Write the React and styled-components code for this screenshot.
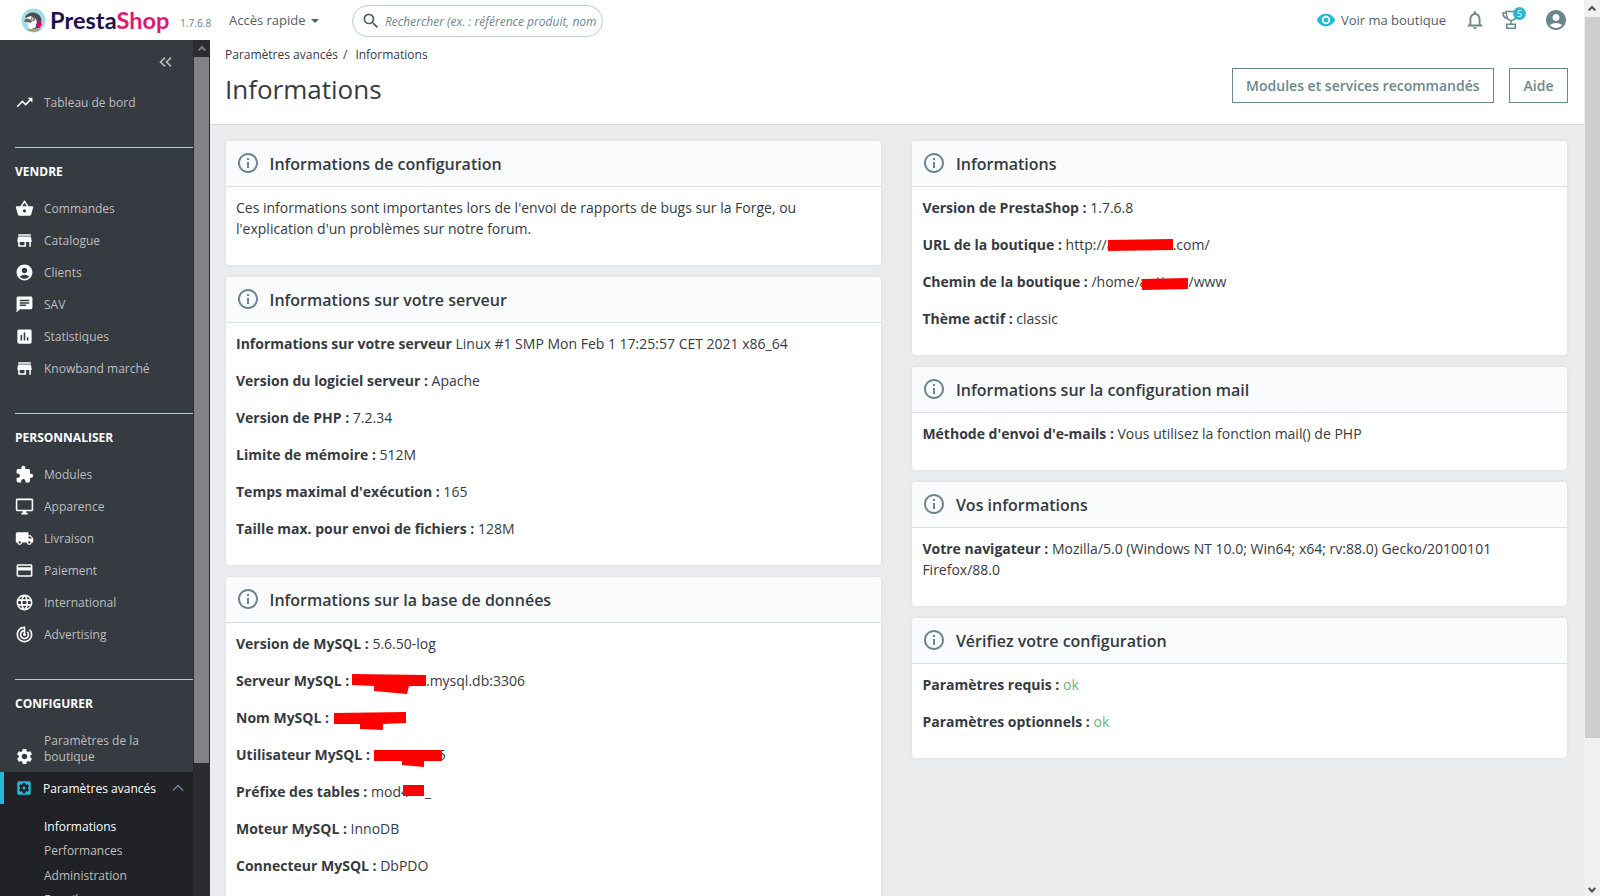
import React from "react";
import styled, { createGlobalStyle } from "styled-components";
import {
  MdTrendingUp,
  MdShoppingBasket,
  MdStore,
  MdAccountCircle,
  MdChat,
  MdAssessment,
  MdExtension,
  MdOutlineDesktopWindows,
  MdLocalShipping,
  MdPayment,
  MdLanguage,
  MdTrackChanges,
  MdSettings,
  MdSettingsApplications,
  MdInfoOutline,
  MdNotificationsNone,
  MdRemoveRedEye,
  MdSearch,
} from "react-icons/md";

const menu = [
  {
    title: "VENDRE",
    items: [
      { label: "Commandes", icon: MdShoppingBasket },
      { label: "Catalogue", icon: MdStore },
      { label: "Clients", icon: MdAccountCircle },
      { label: "SAV", icon: MdChat },
      { label: "Statistiques", icon: MdAssessment },
      { label: "Knowband marché", icon: MdStore },
    ],
  },
  {
    title: "PERSONNALISER",
    items: [
      { label: "Modules", icon: MdExtension },
      { label: "Apparence", icon: MdOutlineDesktopWindows },
      { label: "Livraison", icon: MdLocalShipping },
      { label: "Paiement", icon: MdPayment },
      { label: "International", icon: MdLanguage },
      { label: "Advertising", icon: MdTrackChanges },
    ],
  },
];

const submenu = ["Informations", "Performances", "Administration", "E-mail"];

// Marker shapes hiding the private parts of a value
const marks = {
  url: { width: 66, shape: 67, left: 0, top: 5, points: "1,1 66,0 66,11 1,12", text: "a" },
  path: { width: 49, shape: 49, left: 0, top: 7, points: "2,1 48,0 48,11 2,12", text: "anti" },
  server: {
    width: 73,
    shape: 75,
    left: -1,
    top: 3,
    points: "0,1 74,2 74,13 57,13 55,21 22,18 22,13 0,12",
  },
  name: {
    width: 73,
    shape: 73,
    left: 1,
    top: 5,
    points: "0,1 72,0 72,11 49,12 49,18 26,17 26,12 0,12",
  },
  user: {
    width: 68,
    shape: 68,
    left: 0,
    top: 6,
    points: "0,0 68,0 68,11 50,11 50,17 28,15 28,11 0,11",
  },
  prefix: { width: 24, shape: 22, left: 2, top: 4, points: "0,0 21,0 21,11 0,11", text: "4" },
};

function Mark({ name }) {
  const { width, shape, left, top, points, text } = marks[name];
  return (
    <MarkSlot $width={width}>
      {text}
      <MarkShape width={shape} height="22" $left={left} $top={top}>
        <polygon points={points} fill="#ff0000" />
      </MarkShape>
    </MarkSlot>
  );
}

function Panel({ title, children }) {
  return (
    <Card>
      <CardHeader>
        <MdInfoOutline />
        <h3>{title}</h3>
      </CardHeader>
      <CardBody>{children}</CardBody>
    </Card>
  );
}

function Logo() {
  return (
    <LogoLink>
      <svg width="25" height="25" viewBox="0 0 25 25">
        <circle cx="12.5" cy="12.5" r="12" fill="#a5dbe4" />
        <path d="M4 9 Q7 4 13 4.500 Q20 5.500 20.500 13 L19 20 L12 21 L8 13 Z" fill="#4a4b4e" />
        <path d="M5 10 Q10 6 15 11 Q17 15 14 20 L9 21 Q6 18 7 14 Z" fill="#ffffff" />
        <path d="M3.500 12 Q6 9 10 12 Q12 14 9 15 Q6 13 3.500 14 Z" fill="#6b5f5d" />
        <circle cx="12" cy="11" r="1.800" fill="#fff" stroke="#50484a" strokeWidth="0.800" />
        <circle cx="12.200" cy="11" r="0.700" fill="#332b30" />
        <path d="M14.500 17 L19 12 L21 17 L18 20 Z" fill="#df0067" />
        <path d="M5 21 H20 Q13 27 5 21Z" fill="#b69a79" />
      </svg>
      <Wordmark>
        Presta<span>Shop</span>
      </Wordmark>
    </LogoLink>
  );
}

function Header() {
  return (
    <StyledHeader>
      <Logo />
      <Version>1.7.6.8</Version>
      <QuickAccess>Accès rapide</QuickAccess>
      <SearchBox>
        <MdSearch />
        <span>Rechercher (ex. : référence produit, nom</span>
      </SearchBox>
      <HeaderTools>
        <ShopLink>
          <MdRemoveRedEye />
          Voir ma boutique
        </ShopLink>
        <MdNotificationsNone size={22} />
        <Trophy>
          <svg width="18" height="20" viewBox="0 0 18 20" fill="none" stroke="currentColor" strokeWidth="1.5">
            <path d="M4 1.5 H14 V5 Q14 10.500 9 10.500 Q4.500 10.500 4 1.500Z" />
            <path d="M4 3 H1 Q1 8 6 8.500" />
            <path d="M9 10.500 V14" />
            <path d="M4.750 14.250 H13.250 V18.250 H4.750Z" />
          </svg>
          <Badge>5</Badge>
        </Trophy>
        <MdAccountCircle size={24} />
      </HeaderTools>
    </StyledHeader>
  );
}

function Sidebar() {
  return (
    <StyledSidebar>
      <Collapse>
        <svg width="13" height="10" viewBox="0 0 13 10" fill="none" stroke="currentColor" strokeWidth="1.6">
          <path d="M6 0.700 L1.500 5 L6 9.300 M12 0.700 L7.500 5 L12 9.300" />
        </svg>
      </Collapse>
      <MenuItem>
        <MdTrendingUp />
        Tableau de bord
      </MenuItem>
      {menu.map((section) => (
        <MenuSection key={section.title}>
          <h4>{section.title}</h4>
          {section.items.map(({ label, icon: Icon }) => (
            <MenuItem key={label}>
              <Icon />
              {label}
            </MenuItem>
          ))}
        </MenuSection>
      ))}
      <MenuSection>
        <h4>CONFIGURER</h4>
        <MenuItem $tall>
          <MdSettings />
          Paramètres de la boutique
        </MenuItem>
        <ActiveItem>
          <MdSettingsApplications />
          <span>Paramètres avancés</span>
          <svg className="arrow" width="12" height="8" viewBox="0 0 12 8" fill="none" stroke="currentColor" strokeWidth="1.5">
            <path d="M1 6.500 L6 1.500 L11 6.500" />
          </svg>
        </ActiveItem>
        <Submenu>
          {submenu.map((label, i) => (
            <SubmenuItem key={label} $current={i === 0}>
              {label}
            </SubmenuItem>
          ))}
        </Submenu>
      </MenuSection>
    </StyledSidebar>
  );
}

function Arrow({ down }) {
  return (
    <svg width="8" height="7" viewBox="0 0 8 7" fill="none" stroke="currentColor" strokeWidth="2">
      <path d={down ? "M0.700 1 L4 4.500 L7.300 1" : "M0.700 5.500 L4 2 L7.300 5.500"} />
    </svg>
  );
}

function App() {
  return (
    <Page>
      <GlobalStyle />
      <Window>
        <Header />
        <Columns>
          <Sidebar />
          <MenuScrollbar>
            <Arrow />
            <div />
          </MenuScrollbar>
          <Main>
            <Toolbar>
              <div>
                <Breadcrumb>
                  <span>Paramètres avancés</span>
                  <span>/</span>
                  <span>Informations</span>
                </Breadcrumb>
                <h1>Informations</h1>
              </div>
              <Actions>
                <Button>Modules et services recommandés</Button>
                <Button>Aide</Button>
              </Actions>
            </Toolbar>
            <Content>
              <Stack>
                <Panel title="Informations de configuration">
                  <p>
                    Ces informations sont importantes lors de l'envoi de rapports de bugs sur la Forge, ou
                    <br />
                    l'explication d'un problèmes sur notre forum.
                  </p>
                </Panel>
                <Panel title="Informations sur votre serveur">
                  <p>
                    <b>Informations sur votre serveur</b> Linux #1 SMP Mon Feb 1 17:25:57 CET 2021 x86_64
                  </p>
                  <p>
                    <b>Version du logiciel serveur :</b> Apache
                  </p>
                  <p>
                    <b>Version de PHP :</b> 7.2.34
                  </p>
                  <p>
                    <b>Limite de mémoire :</b> 512M
                  </p>
                  <p>
                    <b>Temps maximal d'exécution :</b> 165
                  </p>
                  <p>
                    <b>Taille max. pour envoi de fichiers :</b> 128M
                  </p>
                </Panel>
                <Panel title="Informations sur la base de données">
                  <p>
                    <b>Version de MySQL :</b> 5.6.50-log
                  </p>
                  <p>
                    <b>Serveur MySQL :</b> <Mark name="server" />
                    .mysql.db:3306
                  </p>
                  <p>
                    <b>Nom MySQL :</b> <Mark name="name" />
                  </p>
                  <p>
                    <b>Utilisateur MySQL :</b> <Clipped>5</Clipped>
                    <Mark name="user" />
                  </p>
                  <p>
                    <b>Préfixe des tables :</b> mod
                    <Mark name="prefix" />_
                  </p>
                  <p>
                    <b>Moteur MySQL :</b> InnoDB
                  </p>
                  <p>
                    <b>Connecteur MySQL :</b> DbPDO
                  </p>
                </Panel>
              </Stack>
              <Stack>
                <Panel title="Informations">
                  <p>
                    <b>Version de PrestaShop :</b> 1.7.6.8
                  </p>
                  <p>
                    <b>URL de la boutique :</b> http://
                    <Mark name="url" />
                    .com/
                  </p>
                  <p>
                    <b>Chemin de la boutique :</b> /home/
                    <Mark name="path" />
                    /www
                  </p>
                  <p>
                    <b>Thème actif :</b> classic
                  </p>
                </Panel>
                <Panel title="Informations sur la configuration mail">
                  <p>
                    <b>Méthode d'envoi d'e-mails :</b> Vous utilisez la fonction mail() de PHP
                  </p>
                </Panel>
                <Panel title="Vos informations">
                  <p>
                    <b>Votre navigateur :</b> Mozilla/5.0 (Windows NT 10.0; Win64; x64; rv:88.0) Gecko/20100101
                    <br />
                    Firefox/88.0
                  </p>
                </Panel>
                <Panel title="Vérifiez votre configuration">
                  <p>
                    <b>Paramètres requis :</b> <Ok>ok</Ok>
                  </p>
                  <p>
                    <b>Paramètres optionnels :</b> <Ok>ok</Ok>
                  </p>
                </Panel>
              </Stack>
            </Content>
          </Main>
        </Columns>
      </Window>
      <PageScrollbar>
        <Arrow />
        <div />
        <Arrow down />
      </PageScrollbar>
    </Page>
  );
}

const GlobalStyle = createGlobalStyle`
  * {
    box-sizing: border-box;
  }
  body {
    margin: 0;
    overflow: hidden;
    font-family: "Open Sans", "Noto Sans", sans-serif;
    font-size: 14px;
    line-height: 21px;
    color: #363a41;
  }
  h1, h3, h4, p {
    margin: 0;
  }
  svg {
    flex-shrink: 0;
  }
`;
const Page = styled.div`
  display: flex;
  height: 896px;
  overflow: hidden;
  background: #fff;
`;
const Window = styled.div`
  width: 1584px;
  display: flex;
  flex-direction: column;
`;
const StyledHeader = styled.header`
  height: 40px;
  flex-shrink: 0;
  display: flex;
  align-items: center;
  padding-left: 21px;
  background: #fff;
`;
const LogoLink = styled.div`
  display: flex;
  align-items: center;
  width: 159px;
`;
const Wordmark = styled.div`
  margin-left: 4px;
  font-family: Lato, sans-serif;
  font-size: 23.5px;
  font-weight: 700;
  line-height: 30px;
  letter-spacing: 0.05px;
  color: #1f0f50;
  span {
    color: #db1a70;
  }
`;
const Version = styled.span`
  width: 49px;
  padding-top: 7px;
  font-size: 10.2px;
  color: #6c868e;
`;
const QuickAccess = styled.div`
  display: flex;
  align-items: center;
  width: 123px;
  font-size: 13px;
  color: #4e6167;
  &::after {
    content: "";
    margin: 2px 0 0 5px;
    border: 4px solid transparent;
    border-top-color: #4e6167;
    border-bottom: 0;
  }
`;
const SearchBox = styled.div`
  display: flex;
  align-items: center;
  width: 251px;
  height: 32px;
  margin-top: 2px;
  padding-left: 8px;
  border: 1px solid #bbcdd2;
  border-radius: 16px;
  font-size: 12px;
  font-style: italic;
  color: #6c868e;
  white-space: nowrap;
  svg {
    width: 20px;
    height: 20px;
    margin-right: 4px;
    color: #4e5f65;
  }
`;
const HeaderTools = styled.div`
  margin-left: auto;
  padding-right: 16px;
  display: flex;
  align-items: center;
  color: #6c868e;
`;
const ShopLink = styled.div`
  display: flex;
  align-items: center;
  margin-right: 18px;
  font-size: 13px;
  color: #4e6167;
  svg {
    width: 20px;
    height: 20px;
    margin-right: 5px;
    color: #25b9d7;
  }
`;
const Trophy = styled.div`
  position: relative;
  display: flex;
  margin: 0 24px 0 16px;
`;
const Badge = styled.span`
  position: absolute;
  top: -3px;
  right: -6px;
  width: 13px;
  height: 13px;
  border-radius: 50%;
  background: #25b9d7;
  color: #fff;
  font-size: 9px;
  line-height: 13px;
  text-align: center;
`;
const Columns = styled.div`
  flex: 1;
  display: flex;
  min-height: 0;
`;
const StyledSidebar = styled.nav`
  width: 193px;
  display: flex;
  flex-direction: column;
  overflow: hidden;
  background: #363a41;
`;
const Collapse = styled.div`
  height: 47px;
  flex-shrink: 0;
  display: flex;
  justify-content: flex-end;
  padding: 17px 21px 0 0;
  color: #bebebe;
`;
const MenuItem = styled.div`
  height: ${({ $tall }) => ($tall ? "47px" : "32px")};
  flex-shrink: 0;
  display: flex;
  align-items: ${({ $tall }) => ($tall ? "flex-end" : "center")};
  padding: 0 30px ${({ $tall }) => ($tall ? "7px" : "0")} 15px;
  font-size: 12px;
  line-height: 16px;
  color: #bebebe;
  svg {
    width: 19px;
    height: 19px;
    margin: 0 10px ${({ $tall }) => ($tall ? "-1px" : "1px")} 0;
    color: #fff;
  }
`;
const MenuSection = styled.div`
  flex-shrink: 0;
  margin-top: 28px;
  h4 {
    margin-left: 15px;
    padding: 14px 0 11px;
    border-top: 1px solid #bbcdd2;
    font-size: 12px;
    line-height: 20px;
    color: #fff;
  }
`;
const ActiveItem = styled.div`
  display: flex;
  align-items: center;
  height: 32px;
  padding-left: 11px;
  border-left: 4px solid #25b9d7;
  background: #202226;
  font-size: 12px;
  color: #fff;
  svg {
    width: 18px;
    height: 18px;
    margin-right: 10px;
    color: #25b9d7;
  }
  .arrow {
    width: 12px;
    height: 8px;
    margin: 0 9px 0 auto;
    color: #6c868e;
  }
`;
const Submenu = styled.div`
  padding: 11px 0 0 44px;
  background: #202226;
`;
const SubmenuItem = styled.div`
  height: 24.4px;
  font-size: 12px;
  line-height: 24px;
  color: ${({ $current }) => ($current ? "#fff" : "#bebebe")};
`;
const MenuScrollbar = styled.div`
  width: 17px;
  display: flex;
  flex-direction: column;
  align-items: center;
  padding: 5px 0 0;
  background: #2b2b31;
  color: #77797d;
  div {
    width: 15px;
    height: 706px;
    margin-top: 5px;
    background: #818286;
  }
`;
const Main = styled.main`
  flex: 1;
  display: flex;
  flex-direction: column;
  min-width: 0;
  background: #e9ebec;
`;
const Toolbar = styled.div`
  height: 85px;
  flex-shrink: 0;
  display: flex;
  justify-content: space-between;
  padding: 5px 16px 0 15px;
  background: #fff;
  border-bottom: 1px solid #d6d9db;
  h1 {
    margin-top: 6px;
    font-size: 26px;
    font-weight: 400;
    line-height: 36px;
  }
`;
const Breadcrumb = styled.div`
  display: flex;
  font-size: 12px;
  line-height: 20px;
  span:nth-child(2) {
    margin: 0 8px 0 5px;
  }
`;
const Actions = styled.div`
  display: flex;
  gap: 15px;
  padding-top: 23px;
`;
const Button = styled.button`
  height: 35px;
  padding: 0 13.5px;
  border: 1px solid #6c868e;
  background: #fff;
  color: #6c868e;
  font: 600 14px "Open Sans", "Noto Sans", sans-serif;
`;
const Content = styled.div`
  flex: 1;
  display: grid;
  grid-template-columns: 655px 654.6px;
  column-gap: 31.4px;
  min-height: 0;
  padding: 16px 0 0 16px;
`;
const Stack = styled.div`
  display: flex;
  flex-direction: column;
  gap: 12px;
`;
const Card = styled.section`
  flex-shrink: 0;
  border-radius: 4px;
  background: #fff;
  box-shadow: 0 0 4px rgba(0, 0, 0, 0.06);
`;
const CardHeader = styled.div`
  height: 46px;
  display: flex;
  align-items: center;
  padding: 0 10px;
  border-bottom: 1px solid #d3e1e4;
  border-radius: 4px 4px 0 0;
  background: #fafbfc;
  h3 {
    padding-top: 1px;
    font-size: 16px;
    font-weight: 600;
  }
  svg {
    width: 24px;
    height: 24px;
    margin: 0 9.5px 1px 0;
    color: #6c868e;
  }
`;
const CardBody = styled.div`
  padding: 10px 10px;
  p {
    margin-bottom: 16px;
    white-space: nowrap;
  }
`;
const Ok = styled.span`
  color: #70b580;
`;
const MarkSlot = styled.span`
  position: relative;
  display: inline-block;
  width: ${({ $width }) => $width}px;
  height: 21px;
  vertical-align: top;
`;
const MarkShape = styled.svg`
  position: absolute;
  left: ${({ $left }) => $left}px;
  top: ${({ $top }) => $top}px;
`;
// Last digit of the user name, half covered by the marker drawn after it
const Clipped = styled.span`
  display: inline-block;
  width: 8px;
  margin: 0 -72px 0 64px;
`;
const PageScrollbar = styled.div`
  width: 16px;
  display: flex;
  flex-direction: column;
  align-items: center;
  padding: 5px 0 2px;
  background: #f0f0f0;
  color: #505050;
  div {
    width: 15px;
    height: 721px;
    margin: 5px 0 auto;
    background: #cdcdcd;
  }
`;
export default App;
